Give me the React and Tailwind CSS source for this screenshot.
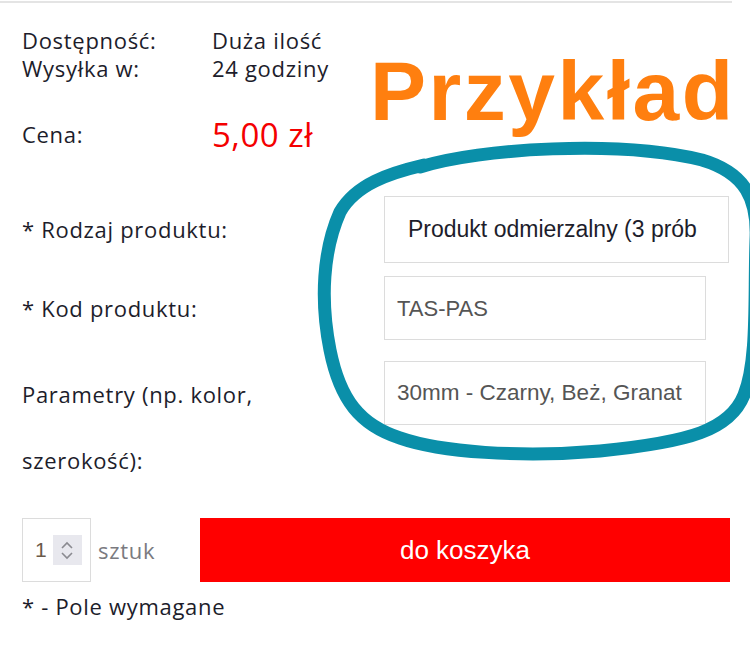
import React from "react";

const labelFont = "font-['Open_Sans','Noto_Sans',sans-serif]";
const fieldFont = "font-['Liberation_Sans','Arial',sans-serif]";

function Spinner() {
    return (
        <div className="w-[29px] h-[30px] bg-[#e8e8ee] flex flex-col items-center justify-center gap-[1px]">
            <svg width="14" height="9" viewBox="0 0 14 9">
                <path d="M2 7 L7 2 L12 7" fill="none" stroke="#8a8a90" strokeWidth="1.6" />
            </svg>
            <svg width="14" height="9" viewBox="0 0 14 9">
                <path d="M2 2 L7 7 L12 2" fill="none" stroke="#8a8a90" strokeWidth="1.6" />
            </svg>
        </div>
    );
}

export default function App() {
    return (
        <div className={`relative w-[750px] h-[651px] bg-white overflow-hidden text-[#1d1d2b] tracking-[0.7px] ${labelFont}`}>
            <div className="w-[732px] mt-[1px] border-t-2 border-[#e4e4e4]" />

            <div className="pl-[22px] pt-[23px]">
                {/* availability */}
                <div className="grid grid-cols-[190px_1fr] text-[22px] leading-[28px]">
                    <span>Dostępność:</span>
                    <span>Duża ilość</span>
                    <span>Wysyłka w:</span>
                    <span>24 godziny</span>
                </div>

                <div className="grid grid-cols-[190px_1fr] items-center mt-[28px] h-[40px]">
                    <span className="text-[22px]">Cena:</span>
                    <span className="text-[33px] tracking-[0.5px] text-[#f40000]">5,00 zł</span>
                </div>

                {/* form */}
                <div className="mt-[46px] grid grid-cols-[362px_1fr] text-[22px]">
                    <div className="h-[67px] flex items-center">* Rodzaj produktu:</div>
                    <div className={`w-[345px] h-[67px] border border-[#dcdcdc] flex items-center pl-[23px] overflow-hidden whitespace-nowrap tracking-normal text-[23px] text-[#1d1d2b] ${fieldFont}`}>
                        Produkt odmierzalny (3 prób
                    </div>

                    <div className="h-[64px] mt-[13px] flex items-center">* Kod produktu:</div>
                    <div className={`w-[322px] h-[64px] mt-[13px] border border-[#dcdcdc] flex items-center pl-[12px] tracking-normal text-[22px] text-[#555] ${fieldFont}`}>
                        TAS-PAS
                    </div>

                    <div className="mt-[21px] leading-[66px]">
                        Parametry (np. kolor,
                        <br />
                        szerokość):
                    </div>
                    <div className={`w-[322px] h-[64px] mt-[21px] border border-[#dcdcdc] flex items-center pl-[12px] tracking-normal text-[22.5px] text-[#555] ${fieldFont}`}>
                        30mm - Czarny, Beż, Granat
                    </div>
                </div>

                {/* quantity + cart */}
                <div className="mt-[25px] flex items-center h-[64px]">
                    <div className="w-[69px] h-[64px] border border-[#dcdcdc] flex items-center pl-[12px] gap-[6px]">
                        <span className={`text-[21px] text-[#6b5a4a] tracking-normal ${fieldFont}`}>1</span>
                        <Spinner />
                    </div>
                    <span className="ml-[7px] text-[22px] text-[#7a7a80]">sztuk</span>
                    <button className={`ml-auto mr-[20px] w-[530px] h-[64px] bg-[#ff0000] text-white text-[26px] tracking-normal ${fieldFont}`}>
                        do koszyka
                    </button>
                </div>

                <div className="mt-[12px] text-[22px] leading-[24px]">* - Pole wymagane</div>
            </div>

            {/* annotation overlay */}
            <div className={`absolute left-[370px] top-[43px] text-[84px] leading-[96px] font-bold tracking-[2.5px] text-[#ff7f0f] ${fieldFont}`}>
                Przykład
            </div>
            <svg className="absolute left-0 top-0 pointer-events-none" width="750" height="651" viewBox="0 0 750 651">
                <path
                    d="M 420 167 C 480 148, 620 140, 702 160 C 746 173, 758 200, 756 240 C 754 300, 758 360, 744 395 C 730 430, 690 442, 600 451 C 520 458, 440 452, 400 438 C 360 425, 340 400, 330 350 C 320 300, 323 250, 340 212 C 356 184, 390 173, 424 165"
                    fill="none"
                    stroke="#0a8fa9"
                    strokeWidth="13"
                    strokeLinecap="round"
                />
            </svg>
        </div>
    );
}
